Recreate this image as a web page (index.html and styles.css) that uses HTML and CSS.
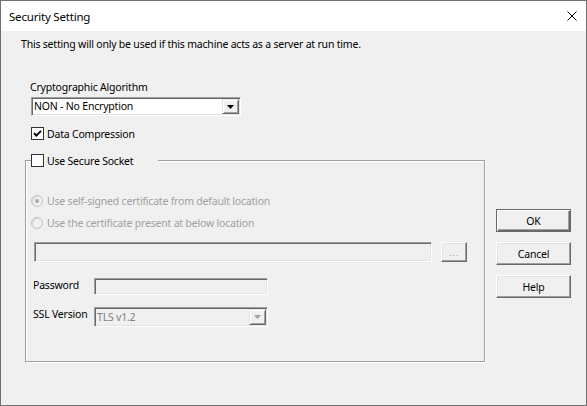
FILE: index.html
```html
<!DOCTYPE html>
<html>
<head>
<meta charset="utf-8">
<title>Security Setting</title>
<link rel="stylesheet" href="styles.css">
</head>
<body>
<div class="window">
  <div class="titlebar">
    <span class="title">Security Setting</span>
    <svg class="close" width="10" height="10" viewBox="0 0 10 10"><path d="M0.5 0.5L9.5 9.5M9.5 0.5L0.5 9.5" stroke="#000" stroke-width="1" fill="none"/></svg>
  </div>
  <div class="client">
    <p class="notice">This setting will only be used if this machine acts as a server at run time.</p>
    <div class="body">
      <div class="main">
        <div class="crypto-label">Cryptographic Algorithm</div>
        <div class="combo crypto">
          <span class="combo-text">NON - No Encryption</span>
          <span class="drop"><svg width="7" height="4" viewBox="0 0 7 4"><polygon points="0,0 7,0 3.5,4" fill="#000"/></svg></span>
        </div>
        <div class="check-row compress">
          <span class="checkbox"><svg width="11" height="11" viewBox="0 0 11 11"><path d="M2 5.2L4.3 7.6L9 2.8" stroke="#000" stroke-width="1.9" fill="none"/></svg></span>
          <span class="check-label">Data Compression</span>
        </div>
        <div class="group">
          <div class="check-row legend">
            <span class="checkbox"></span>
            <span class="check-label">Use Secure Socket</span>
          </div>
          <div class="radio-row r1">
            <span class="radio"><span class="dot"></span></span>
            <span class="radio-label">Use self-signed certificate from default location</span>
          </div>
          <div class="radio-row r2">
            <span class="radio"></span>
            <span class="radio-label">Use the certificate present at below location</span>
          </div>
          <div class="path-row">
            <div class="field path"></div>
            <div class="browse">...</div>
          </div>
          <div class="form-row pw">
            <span class="flabel">Password</span>
            <div class="field pwfield"></div>
          </div>
          <div class="form-row ssl">
            <span class="flabel">SSL Version</span>
            <div class="combo disabled sslcombo">
              <span class="combo-text">TLS v1.2</span>
              <span class="drop"><svg width="7" height="4" viewBox="0 0 7 4"><polygon points="0,0 7,0 3.5,4" fill="#a0a0a0"/></svg></span>
            </div>
          </div>
        </div>
      </div>
      <div class="buttons">
        <div class="btn default">OK</div>
        <div class="btn">Cancel</div>
        <div class="btn">Help</div>
      </div>
    </div>
  </div>
</div>
</body>
</html>
```

FILE: styles.css
```css
* { box-sizing: border-box; }
html, body { margin: 0; padding: 0; background: #ffffff; }
body {
  font-family: "Noto Sans", "Liberation Sans", sans-serif;
  font-size: 10.5px;
  letter-spacing: -0.2px;
  color: #000;
}
.window {
  width: 587px;
  height: 406px;
  border: 1px solid #707070;
  background: #f0f0f0;
  display: flex;
  flex-direction: column;
}
.titlebar {
  height: 30px;
  flex: none;
  background: #fff;
  display: flex;
  align-items: center;
  padding-left: 8px;
  padding-right: 9px;
}
.title { flex: 1; font-size: 11.5px; }
.close { display: block; }
.client { flex: 1; padding-left: 20px; }
.notice { margin: 6px 0 0; line-height: 14px; height: 14px; white-space: nowrap; }
.body { display: flex; align-items: flex-start; }
.main { margin-left: 4px; width: 460px; }
.crypto-label { margin: 29px 0 0 5px; line-height: 14px; }

.combo {
  display: flex;
  background: #fff;
  border: 1px solid;
  border-color: #a0a0a0 #fff #fff #a0a0a0;
  box-shadow: inset 1px 1px 0 #696969, inset -1px -1px 0 #e3e3e3;
  padding: 1px;
}
.combo.disabled { background: #f0f0f0; color: #808080; }
.crypto { margin: 3px 0 0 6px; width: 210px; height: 19px; }
.combo-text { flex: 1; line-height: 15px; padding-left: 1px; white-space: nowrap; }
.drop {
  width: 17px;
  flex: none;
  background: #f0f0f0;
  border: 1px solid;
  border-color: #e3e3e3 #696969 #696969 #e3e3e3;
  box-shadow: inset 1px 1px 0 #fff, inset -1px -1px 0 #a0a0a0;
  display: flex;
  align-items: center;
  justify-content: center;
}
.drop svg { display: block; }

.check-row { display: flex; align-items: center; height: 13px; }
.compress { margin: 11px 0 0 6px; }
.checkbox {
  width: 13px;
  height: 13px;
  flex: none;
  border: 1px solid #333;
  background: #fff;
  display: flex;
  align-items: center;
  justify-content: center;
}
.checkbox svg { display: block; }
.check-label { margin-left: 3px; white-space: nowrap; }

.group {
  margin-top: 20px;
  width: 460px;
  height: 202px;
  border: 1px solid #a0a0a0;
  box-shadow: 1px 1px 0 #fff, inset 1px 1px 0 #fff;
  padding-left: 5px;
}
.legend {
  margin-top: -7px;
  width: 127px;
  background: #f0f0f0;
}

.radio-row { display: flex; align-items: center; height: 13px; color: #a0a0a0; }
.r1 { margin-top: 27px; }
.r2 { margin-top: 9px; }
.radio {
  width: 12px;
  height: 12px;
  flex: none;
  border-radius: 50%;
  border: 1px solid #c2c2c2;
  background: #f0f0f0;
  box-shadow: inset 1px 1px 0 #d8d8d8;
  display: flex;
  align-items: center;
  justify-content: center;
}
.dot { width: 4px; height: 4px; border-radius: 50%; background: #a8a8a8; }
.radio-label { margin-left: 4px; white-space: nowrap; }

.field {
  background: #f0f0f0;
  border: 1px solid;
  border-color: #a0a0a0 #fff #fff #a0a0a0;
  box-shadow: inset 1px 1px 0 #696969, inset -1px -1px 0 #e3e3e3;
}
.path-row { display: flex; margin: 13px 0 0 3px; }
.path { width: 398px; height: 20px; }
.browse {
  margin-left: 9px;
  width: 26px;
  height: 20px;
  background: #f0f0f0;
  border: 1px solid;
  border-color: #fff #696969 #696969 #fff;
  box-shadow: inset -1px -1px 0 #a0a0a0, inset 1px 1px 0 #e3e3e3;
  color: #a0a0a0;
  font-size: 9px;
  line-height: 19px;
  text-align: center;
  letter-spacing: 1px;
}

.form-row { display: flex; align-items: flex-start; margin-left: 2px; }
.pw { margin-top: 16px; }
.ssl { margin-top: 12px; }
.flabel { width: 61px; line-height: 14px; white-space: nowrap; }
.pwfield { width: 174px; height: 17px; }
.sslcombo { width: 174px; height: 20px; }
.sslcombo .combo-text { line-height: 16px; }

.buttons {
  margin: 158px 0 0 11px;
  display: flex;
  flex-direction: column;
  gap: 10px;
}
.btn {
  width: 75px;
  height: 23px;
  background: #f0f0f0;
  border: 1px solid;
  border-color: #fff #696969 #696969 #fff;
  box-shadow: inset -1px -1px 0 #a0a0a0, inset 1px 1px 0 #e3e3e3;
  display: flex;
  align-items: center;
  justify-content: center;
}
.btn.default {
  border-color: #696969;
  box-shadow: inset 1px 1px 0 #fff, inset -1px -1px 0 #696969, inset -2px -2px 0 #a0a0a0;
}
```
